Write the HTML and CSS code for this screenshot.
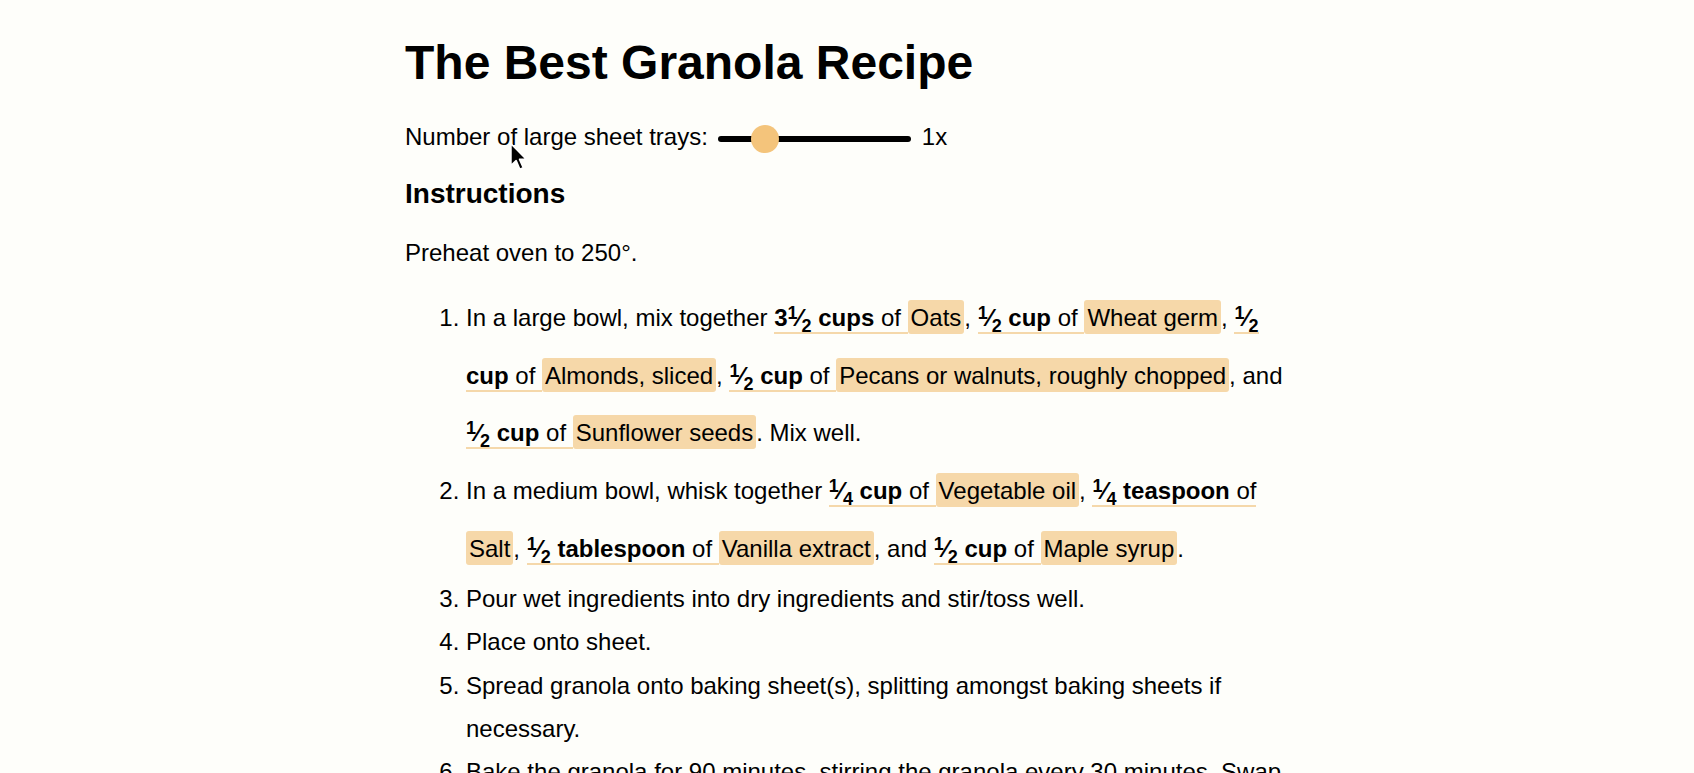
FILE: index.html
```html
<!DOCTYPE html>
<html lang="en">
<head>
<meta charset="utf-8">
<title>The Best Granola Recipe</title>
<link rel="stylesheet" href="styles.css">
</head>
<body>
<main class="recipe">
  <h1 class="title">The Best Granola Recipe</h1>
  <div class="scale">
    <label class="scale-label" for="trays">Number of large sheet trays:</label>
    <input id="trays" class="scale-range" type="range" min="0.5" max="3" step="0.5" value="1">
    <span class="scale-value">1x</span>
  </div>
  <h3 class="section">Instructions</h3>
  <p class="intro">Preheat oven to 250°.</p>
  <ol class="steps">
    <li class="step step-ing">In a large bowl, mix together <span class="amt"><b>3<span class="frac"><sup>1</sup>⁄<sub>2</sub></span> cups</b> of </span><span class="name">Oats</span>, <span class="amt"><b><span class="frac"><sup>1</sup>⁄<sub>2</sub></span> cup</b> of </span><span class="name">Wheat germ</span>, <span class="amt"><b><span class="frac"><sup>1</sup>⁄<sub>2</sub></span> cup</b> of </span><span class="name">Almonds, sliced</span>, <span class="amt"><b><span class="frac"><sup>1</sup>⁄<sub>2</sub></span> cup</b> of </span><span class="name">Pecans or walnuts, roughly chopped</span>, and <span class="amt"><b><span class="frac"><sup>1</sup>⁄<sub>2</sub></span> cup</b> of </span><span class="name">Sunflower seeds</span>. Mix well.</li>
    <li class="step step-ing">In a medium bowl, whisk together <span class="amt"><b><span class="frac"><sup>1</sup>⁄<sub>4</sub></span> cup</b> of </span><span class="name">Vegetable oil</span>, <span class="amt"><b><span class="frac"><sup>1</sup>⁄<sub>4</sub></span> teaspoon</b> of </span><span class="name">Salt</span>, <span class="amt"><b><span class="frac"><sup>1</sup>⁄<sub>2</sub></span> tablespoon</b> of </span><span class="name">Vanilla extract</span>, and <span class="amt"><b><span class="frac"><sup>1</sup>⁄<sub>2</sub></span> cup</b> of </span><span class="name">Maple syrup</span>.</li>
    <li class="step">Pour wet ingredients into dry ingredients and stir/toss well.</li>
    <li class="step">Place onto sheet.</li>
    <li class="step">Spread granola onto baking sheet(s), splitting amongst baking sheets if necessary.</li>
    <li class="step">Bake the granola for 90 minutes, stirring the granola every 30 minutes. Swap the position of the sheets each time if using more than one.</li>
  </ol>
</main>
<svg class="cursor" width="20" height="30" viewBox="0 0 17 26" aria-hidden="true">
  <path d="M1.5 1.5 L1.5 20.5 L6 16.2 L9.2 23.6 L12.2 22.3 L9 15 L15 15 Z" fill="#000" stroke="#fff" stroke-width="1.4" stroke-linejoin="round"/>
</svg>
</body>
</html>
```

FILE: styles.css
```css
* {
  box-sizing: border-box;
}

html,
body {
  margin: 0;
  height: 100%;
  overflow: hidden;
}

body {
  position: relative;
  background: #fefefa;
  color: #000;
  font-family: "Liberation Sans", Arial, Helvetica, sans-serif;
  font-size: 24px;
  line-height: 1.8;
}

.recipe {
  width: 884px;
  margin: 0 auto;
  padding-top: 34px;
}

.title {
  margin: 0 0 23px;
  font-size: 48px;
  line-height: 57.6px;
  font-weight: bold;
}

.scale {
  display: flex;
  align-items: center;
  gap: 10px;
  height: 43.2px;
}

.scale-range {
  -webkit-appearance: none;
  appearance: none;
  width: 193px;
  height: 6px;
  margin: 5px 0 0;
  padding: 0;
  border-radius: 3px;
  background: #000;
  outline: none;
}

.scale-range::-webkit-slider-thumb {
  -webkit-appearance: none;
  appearance: none;
  width: 28px;
  height: 28px;
  border: none;
  border-radius: 50%;
  background: #f4c47b;
}

.scale-value {
  margin-left: 1px;
}

.section {
  margin: 19px 0 0;
  font-size: 28px;
  line-height: 33.6px;
  font-weight: bold;
}

.intro {
  margin: 21px 0 0;
}

.steps {
  margin: 14.6px 0 0;
  padding-left: 61px;
}

.step-ing {
  line-height: 57.6px;
}

.amt {
  padding-bottom: 1px;
  border-bottom: 2px solid #f5d8aa;
}

.amt b {
  font-weight: bold;
}

.frac {
  font-weight: bold;
}

.frac sup,
.frac sub {
  font-size: 0.75em;
  line-height: 0;
}

.frac sup {
  vertical-align: 7px;
}

.frac sub {
  vertical-align: -6px;
}

.name {
  padding: 4px 3px 3px;
  border-radius: 3px;
  background: #f6d8a9;
}

.cursor {
  position: absolute;
  left: 509px;
  top: 142px;
}
```
